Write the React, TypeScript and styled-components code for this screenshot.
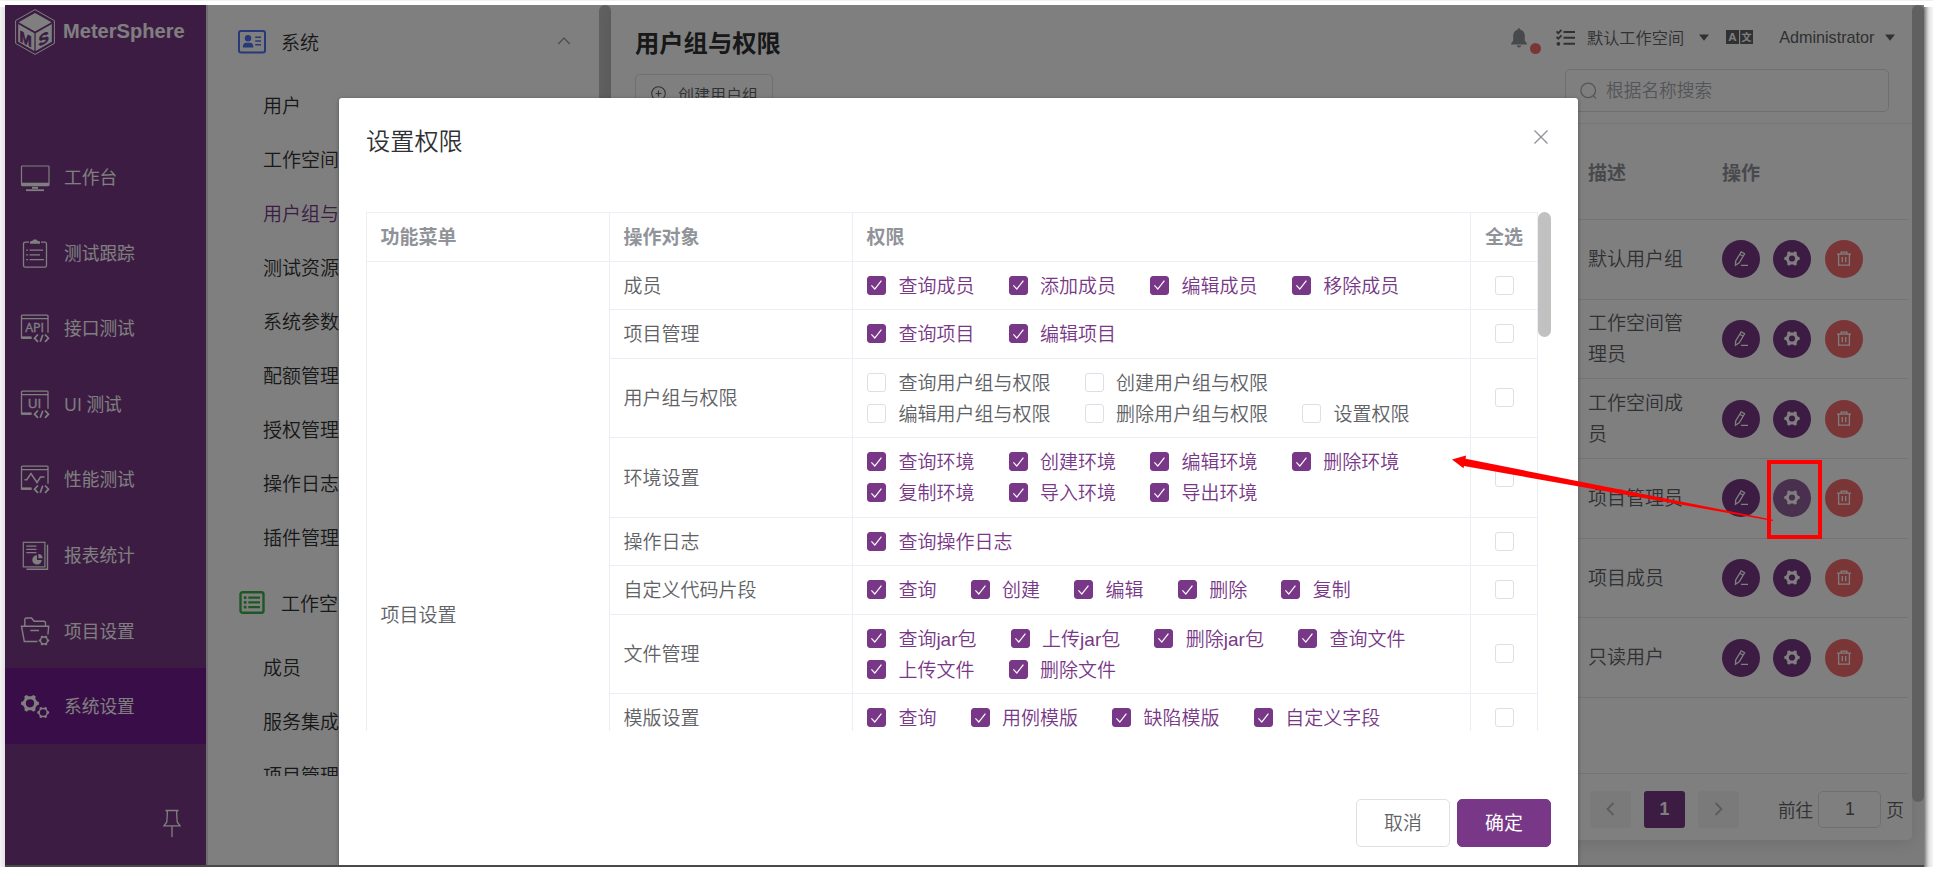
import React from "react";
import styled, { createGlobalStyle, css } from "styled-components";

const FONT = '"Liberation Sans", "Noto Sans CJK SC", sans-serif';
const PRIMARY = "#783887";

const GlobalStyle = createGlobalStyle`
  html, body { margin: 0; padding: 0; background: #fff; overflow: hidden; }
  *, *::before, *::after { box-sizing: border-box; }
  body { font-family: ${FONT}; font-size: 19px; font-weight: 350; color: #606266; }
`;

/* ---------- window ---------- */

const Page = styled.div`
  width: 1933px;
  height: 874px;
  display: flex;
  flex-direction: column;
  background: #fff;
  overflow: hidden;
`;
const TopEdge = styled.div`
  height: 5px;
  flex: none;
  border-top: 1px solid #f0f0f0;
`;
const Body = styled.div`
  display: flex;
  height: 862px;
`;
const SideEdge = styled.div<{ $right?: boolean }>`
  width: ${(p) => (p.$right ? 9 : 5)}px;
  margin-top: 2px;
  flex: none;
  background: ${(p) =>
    p.$right
      ? "linear-gradient(to right, #777 0%, #a8a8a8 22%, #d8d8d8 48%, #efefef 80%, #f2f2f2 100%)"
      : "linear-gradient(to right, #f3f3f3, #e2e2e4)"};
`;
const Frame = styled.div`
  position: relative;
  width: 1919px;
  height: 862px;
  display: flex;
  overflow: hidden;
  border-bottom: 2px solid #4b4849;
`;

/* ---------- primary sidebar ---------- */

const Sidebar = styled.aside`
  width: 201px;
  flex: none;
  background: ${PRIMARY};
  display: flex;
  flex-direction: column;
  color: #fff;
`;
const Brand = styled.div`
  height: 134.3px;
  padding: 4px 0 0 10px;
  display: flex;
  align-items: flex-start;
  gap: 8px;
`;
const BrandName = styled.span`
  font-weight: 700;
  font-size: 20.1px;
  line-height: 44px;
`;
const NavItem = styled.div<{ $active?: boolean }>`
  height: 75.6px;
  display: flex;
  align-items: center;
  padding-left: 15px;
  gap: 14px;
  font-size: 17.7px;
  font-weight: 400;
  font-family: "Open Sans", "Noto Sans CJK SC", sans-serif;
  background: ${(p) => (p.$active ? "#721b8e" : "transparent")};
  svg { flex: none; }
`;
const NavLabel = styled.span`
  line-height: 26px;
`;
const PinRow = styled.div`
  flex: 1;
  display: flex;
  justify-content: flex-end;
  padding: 65px 25px 0 0;
`;

/* ---------- secondary menu ---------- */

const SubMenu = styled.nav`
  width: 405px;
  flex: none;
  background: #fff;
  border-left: 2px solid #dcdce0;
  display: flex;
`;
const SubScroll = styled.div`
  width: 391px;
  height: 771px;
  overflow: hidden;
`;
const GroupHead = styled.div<{ $h: number }>`
  height: ${(p) => p.$h}px;
  display: flex;
  align-items: center;
  padding: 0 28px 0 30px;
  color: #303133;
  svg { flex: none; }
`;
const GroupTitle = styled.span`
  flex: 1;
  padding: 0 0 1px 15px;
`;
const SubItem = styled.div<{ $active?: boolean }>`
  height: 54px;
  line-height: 56px;
  padding-left: 55px;
  color: ${(p) => (p.$active ? PRIMARY : "#303133")};
  white-space: nowrap;
`;
const ScrollThumb = styled.div<{ $h: number; $w: number }>`
  width: ${(p) => p.$w}px;
  height: ${(p) => p.$h}px;
  flex: none;
  border-radius: ${(p) => p.$w / 2}px;
  background: #c1c1c1;
`;

/* ---------- main area ---------- */

const Main = styled.main`
  flex: 1;
  display: flex;
  background: #f6f6f7;
  min-width: 0;
`;
const Card = styled.section`
  width: 1301px;
  height: 835px;
  background: #fff;
  border-radius: 0 0 5px 5px;
  box-shadow: 0 3px 16px rgba(0, 0, 0, 0.1);
  display: flex;
  flex-direction: column;
`;
const CardHead = styled.header`
  height: 119px;
  flex: none;
  display: flex;
  justify-content: space-between;
  padding-left: 24px;
  border-bottom: 1px solid #ebeef5;
`;
const HeadLeft = styled.div`
  display: flex;
  flex-direction: column;
  align-items: flex-start;
`;
const PageTitle = styled.h1`
  margin: 0;
  height: 69px;
  line-height: 78px;
  font-size: 24.3px;
  color: #303133;
`;
const OutlineButton = styled.button`
  width: 138px;
  height: 41px;
  display: flex;
  align-items: center;
  gap: 12px;
  padding: 0 0 2px 15px;
  font: 350 16px ${FONT};
  color: #606266;
  background: #fff;
  border: 1px solid #dcdfe6;
  border-radius: 4px;
  white-space: nowrap;
`;
const HeadRight = styled.div`
  width: 401px;
  flex: none;
`;
const Tools = styled.div`
  height: 64px;
  display: flex;
  align-items: center;
  font-size: 16.2px;
  color: #606266;
  white-space: nowrap;
  svg { flex: none; }
`;
const Bell = styled.div`
  position: relative;
  width: 45px;
  height: 19px;
`;
const Dot = styled.i`
  position: absolute;
  left: 18.5px;
  top: 15px;
  width: 11px;
  height: 11px;
  border-radius: 50%;
  background: #f56c6c;
`;
const Gap = styled.span<{ $w: number }>`
  width: ${(p) => p.$w}px;
  flex: none;
`;
const SearchBox = styled.div`
  width: 324px;
  height: 43px;
  margin-left: 54px;
  display: flex;
  align-items: center;
  gap: 9px;
  padding-left: 14px;
  border: 1px solid #dcdfe6;
  border-radius: 5px;
  font-size: 17.7px;
  color: #a8abb2;
`;
const Placeholder = styled.span`
  padding-bottom: 4px;
`;
const UserRow = styled.div<{ $head?: boolean }>`
  height: ${(p) => (p.$head ? 96 : 79.7)}px;
  display: grid;
  grid-template-columns: 1fr 134px 186px;
  align-items: center;
  margin-right: 4px;
  padding-top: ${(p) => (p.$head ? 3 : 0)}px;
  border-bottom: 1px solid #e4e7ee;
  line-height: 31px;
  ${(p) => p.$head && css`
    color: #909399;
    font-weight: 700;
  `}
`;
const Desc = styled.div`
  grid-column: 2;
  width: 100px;
`;
const Actions = styled.div`
  grid-column: 3;
  display: flex;
  gap: 13.3px;
`;
const RoundButton = styled.button<{ $kind: "primary" | "soft" | "danger" }>`
  width: 38px;
  height: 38px;
  flex: none;
  padding: 0;
  border: 0;
  border-radius: 50%;
  color: #fff;
  display: flex;
  align-items: center;
  justify-content: center;
  background: ${(p) => ({ primary: PRIMARY, soft: "#93609f", danger: "#f56c6c" }[p.$kind])};
`;
const TableFoot = styled.div`
  height: 75.5px;
  margin-right: 4px;
  border-bottom: 1px solid #e4e7ee;
`;
const Pager = styled.div`
  flex: 1;
  display: flex;
  align-items: center;
  justify-content: flex-end;
  padding: 5px 8px 0 0;
  font-size: 17.7px;
  gap: 5px;
`;
const PageButton = styled.span<{ $on?: boolean }>`
  width: 41px;
  height: 37px;
  margin-right: 8px;
  display: flex;
  align-items: center;
  justify-content: center;
  border-radius: 3px;
  font-weight: 700;
  color: ${(p) => (p.$on ? "#fff" : "#a8abb2")};
  background: ${(p) => (p.$on ? PRIMARY : "#f4f4f5")};
`;
const PageInput = styled.span`
  width: 63px;
  height: 37px;
  line-height: 35px;
  text-align: center;
  border: 1px solid #dcdfe6;
  border-radius: 5px;
`;
const GoTo = styled.span`
  padding-left: 26px;
`;

/* ---------- dialog ---------- */

const Mask = styled.div`
  position: absolute;
  inset: 0;
  background: rgba(0, 0, 0, 0.5);
`;
const Dialog = styled.div`
  position: absolute;
  left: 334px;
  top: 93px;
  width: 1239px;
  height: 767px;
  padding: 0 27px;
  background: #fff;
  border-radius: 3px 3px 0 0;
  box-shadow: 0 1px 4px rgba(0, 0, 0, 0.35);
  display: flex;
  flex-direction: column;
`;
const DialogHead = styled.div`
  height: 114px;
  flex: none;
  display: flex;
  justify-content: space-between;
  align-items: flex-start;
  font-size: 24.2px;
  line-height: 32px;
  padding-top: 28px;
  color: #303133;
  svg { margin: 4px 3px 0 0; }
`;
const DialogBody = styled.div`
  height: 519px;
  flex: none;
  display: flex;
  overflow: hidden;
`;
const Table = styled.div`
  width: 1172px;
  flex: none;
  height: 754px;
  border: 1px solid #ebeef5;
  border-width: 1px 1px 0 1px;
`;
const HeadRow = styled.div`
  height: 49px;
  display: grid;
  grid-template-columns: 243px 243px 618px 1fr;
  border-bottom: 1px solid #ebeef5;
  color: #909399;
  font-weight: 700;
`;
const Cell = styled.div<{ $center?: boolean; $last?: boolean }>`
  display: flex;
  align-items: center;
  padding: 0 0 3px ${(p) => (p.$center ? 0 : 13.5)}px;
  justify-content: ${(p) => (p.$center ? "center" : "flex-start")};
  border-right: ${(p) => (p.$last ? "0" : "1px solid #ebeef5")};
  white-space: nowrap;
`;
const CheckCell = styled.div`
  display: flex;
  align-items: center;
  justify-content: center;
  padding-bottom: 1px;
`;
const Span = styled.div`
  display: flex;
  height: 705px;
`;
const MenuCell = styled(Cell)`
  width: 243px;
  flex: none;
`;
const Rows = styled.div`
  flex: 1;
`;
const Row = styled.div<{ $double?: boolean }>`
  height: ${(p) => (p.$double ? 79.6 : 48.4)}px;
  display: grid;
  grid-template-columns: 243px 618px 1fr;
  border-bottom: 1px solid #ebeef5;
`;
const Perms = styled.div`
  display: flex;
  flex-wrap: wrap;
  align-content: center;
  padding: 0 0 1px 14px;
  border-right: 1px solid #ebeef5;
`;
const Perm = styled.label<{ $on: boolean }>`
  height: 31px;
  display: flex;
  align-items: center;
  gap: 12.4px;
  margin-right: 34.2px;
  white-space: nowrap;
  color: ${(p) => (p.$on ? PRIMARY : "#606266")};
  &:last-child { margin-right: 0; }
`;
const PermName = styled.span`
  padding-bottom: 2px;
`;
const Box = styled.span<{ $on?: boolean }>`
  width: 19px;
  height: 19px;
  flex: none;
  display: flex;
  align-items: center;
  justify-content: center;
  border: 1px solid ${(p) => (p.$on ? PRIMARY : "#dcdfe6")};
  border-radius: 3px;
  background: ${(p) => (p.$on ? PRIMARY : "#fff")};
`;
const DialogFoot = styled.div`
  display: flex;
  justify-content: flex-end;
  gap: 7px;
  padding-top: 68px;
`;
const DialogButton = styled.button<{ $primary?: boolean }>`
  width: 94px;
  height: 48px;
  padding: 0 0 4px;
  font: ${(p) => (p.$primary ? 400 : 350)} 18.9px ${FONT};
  border-radius: 5px;
  border: 1px solid ${(p) => (p.$primary ? PRIMARY : "#dcdfe6")};
  color: ${(p) => (p.$primary ? "#fff" : "#606266")};
  background: ${(p) => (p.$primary ? PRIMARY : "#fff")};
`;
const Callout = styled.svg`
  position: absolute;
  left: 0;
  top: 0;
`;

/* ---------- icons ---------- */

const Logo = () => (
  <svg width="40" height="46" viewBox="0 0 40 46">
    <path d="M20 .6 39.4 11.6V34.4L20 45.4.6 34.4V11.6Z" fill="none" stroke="#fff" strokeWidth="1" />
    <path d="M20 4 36.5 13.2 20 22.6 3.5 13.2Z" fill="#fff" />
    <path d="M3.2 15 19.4 24.2V42L3.2 32.8Z" fill="#fff" />
    <path d="M36.8 15 20.6 24.2V42L36.8 32.8Z" fill="#fff" />
    <g fill={PRIMARY} stroke={PRIMARY} strokeWidth=".6" fontFamily="Liberation Sans" fontWeight="700">
      <text transform="matrix(.95 .5 0 1 4.4 32)" fontSize="15.5">M</text>
      <text transform="matrix(1 -.55 0 1 23.4 38)" fontSize="15.5">S</text>
    </g>
  </svg>
);

const gearPath = (cx: number, cy: number, r: number) => {
  const pts: string[] = [];
  for (let i = 0; i < 6; i++) {
    [-17, -9, 9, 17].forEach((o, k) => {
      const a = ((i * 60 + o - 60) * Math.PI) / 180;
      const rr = k === 1 || k === 2 ? r : r * 0.8;
      pts.push(`${(cx + rr * Math.cos(a)).toFixed(2)} ${(cy + rr * Math.sin(a)).toFixed(2)}`);
    });
  }
  return `M${pts.join("L")}Z`;
};

const WindowIcon = ({ children }: { children: React.ReactNode }) => (
  <svg width="30" height="30" viewBox="0 -0.7 30 30" fill="none" stroke="#fff" strokeWidth="1.3">
    <path d="M28 19V2.3Q28 1.5 27.2 1.5H2.3Q1.5 1.5 1.5 2.3V24.3H11.5M1.5 5H28" />
    <path d="M2 23.9H11.5" strokeWidth="2.4" />
    <path d="M18 20.8 14.5 24.5 18 28.2M25 20.8 28.5 24.5 25 28.2M22.8 21 20.2 28" strokeWidth="1.7" />
    {children}
  </svg>
);
const IconLabel = ({ t, size }: { t: string; size: number }) => (
  <text x="14.6" y="18.2" fontSize={size} textAnchor="middle" fill="#fff" stroke="#fff" strokeWidth=".3" fontFamily="Open Sans" fontWeight="400">{t}</text>
);

const navIcons: Record<string, React.ReactNode> = {
  desk: (
    <svg width="30" height="30" viewBox="0 -1 30 30" fill="none" stroke="#fff" strokeWidth="1.2">
      <rect x="1.5" y="3" width="27.5" height="19.6" rx=".8" />
      <path d="M1.5 21H29" strokeWidth="2.6" />
      <path d="M12 24.8H18" strokeWidth="2" />
      <path d="M6 27.2H24" strokeWidth="1.8" />
    </svg>
  ),
  track: (
    <svg width="30" height="30" viewBox="0 -0.7 30 30" fill="none" stroke="#fff" strokeWidth="1.3">
      <path d="M9 3.5H5.3Q3.5 3.5 3.5 5.3V26.7Q3.5 28.5 5.3 28.5H24.7Q26.5 28.5 26.5 26.7V5.3Q26.5 3.5 24.7 3.5H21" />
      <path d="M10 5V3.5Q10 2.4 11.3 2.4H12.4Q12.6.8 14 .8H16Q17.4.8 17.6 2.4H18.7Q20 2.4 20 3.5V5Z" fill="#fff" stroke="none" />
      <path d="M9.5 11.5H23M9.5 16.2H20M9.5 21H24M6.2 11.5H8M6.2 16.2H8M6.2 21H8" />
    </svg>
  ),
  api: <WindowIcon><IconLabel t="API" size={12.5} /></WindowIcon>,
  ui: <WindowIcon><IconLabel t="UI" size={13.5} /></WindowIcon>,
  perf: <WindowIcon><path d="M4.5 15H6.8L11 8.8 17 17.8 20.5 12.2H24.5" strokeWidth="1.5" /></WindowIcon>,
  report: (
    <svg width="30" height="30" viewBox="0 -0.7 30 30" fill="none" stroke="#fff" strokeWidth="1.2">
      <rect x="3.3" y="1.6" width="21.6" height="24.6" />
      <path d="M27.5 4V28.6H6.5" strokeWidth="1.4" />
      <path d="M6.3 5.5H16.5M6.3 8.7H16.5M6.3 12H16.5" />
      <path d="M17 14.5A4.7 4.7 0 1 0 21.7 19.2H17Z" fill="#fff" stroke="none" />
      <path d="M18.4 13.4A4.4 4.4 0 0 1 22.6 17.6H18.4Z" fill="#fff" stroke="none" />
    </svg>
  ),
  project: (
    <svg width="30" height="30" viewBox="0 -0.5 30 30" fill="none" stroke="#fff" strokeWidth="1.4">
      <path d="M4.8 9.5V3Q4.8 1.5 6.2 1.5H11.5L14.2 4.8H24Q25.5 4.8 25.5 6.3V9.5" />
      <path d="M17.5 25H4.3L1.5 9.7H28.7L27.9 18M10.3 14H19" />
      <path d={gearPath(24, 24, 5.3)} fill="#fff" stroke="none" />
      <circle cx="24" cy="24" r="2.8" fill={PRIMARY} stroke="none" />
    </svg>
  ),
  system: (
    <svg width="30" height="30" viewBox="0 0 30 30">
      <path d={gearPath(10, 12.3, 9)} fill="#fff" />
      <circle cx="10" cy="12.3" r="4.1" fill="#721b8e" />
      <path d={gearPath(23.2, 21.5, 6)} fill="#fff" />
      <circle cx="23.2" cy="21.5" r="3.3" fill="#721b8e" />
    </svg>
  ),
};

const PinIcon = () => (
  <svg width="18" height="29" viewBox="0 0 18 29" fill="none" stroke="#fff" strokeWidth="1.3">
    <path d="M2.5 1.5H15.5M4.3 1.5V5.5L3.8 13 1 16.8H17L14.2 13 13.7 5.5V1.5M9 17V28" />
  </svg>
);
const IdIcon = () => (
  <svg width="28" height="24" viewBox="0 0 28 24">
    <rect x="1" y="1" width="26" height="21.6" rx="2" fill="none" stroke="#5171f0" strokeWidth="2" />
    <circle cx="10" cy="8.2" r="3.2" fill="#5171f0" />
    <path d="M4.8 17.5Q4.8 12.8 8 12.8H12Q15.4 12.8 15.4 17.5Z" fill="#5171f0" />
    <path d="M17.2 7.2H23M17.2 11H23M17.2 14.8H23" stroke="#5171f0" strokeWidth="1.6" />
  </svg>
);
const ListIcon = () => (
  <svg width="28" height="24" viewBox="0 0 28 24" fill="none" stroke="#3faf49">
    <rect x="2.5" y="1.2" width="23" height="20.6" rx="2" strokeWidth="2.4" />
    <path d="M10.3 6.6H22M10.3 11.4H22M10.3 16.2H22" strokeWidth="2.3" />
    <path d="M5.8 6.6H8.5M5.8 11.4H8.5M5.8 16.2H8.5" strokeWidth="2.7" />
  </svg>
);
const Chevron = () => (
  <svg width="14" height="12" viewBox="0 0 14 12" fill="none" stroke="#909399" strokeWidth="1.2">
    <path d="M1.2 8 7 2 12.8 8" />
  </svg>
);
const Caret = () => (
  <svg width="10" height="7" viewBox="0 0 10 7"><path d="M0 .5H10L5 6.8Z" fill="#606266" /></svg>
);
const EditIcon = () => (
  <svg width="20" height="20" viewBox="0 0 20 20" fill="none" stroke="currentColor" strokeWidth="1.3">
    <path d="M10.2 2.8 13.6 4.8 8.2 13.9 4.4 16.2 4.7 11.9ZM8.8 5.2 12.2 7.2M10 16.3H17" />
  </svg>
);
const GearIcon = ({ hole }: { hole: string }) => (
  <svg width="20" height="20" viewBox="0 0 20 20">
    <path d={gearPath(10, 9.5, 7.8)} fill="currentColor" />
    <circle cx="10" cy="9.5" r="3.1" fill={hole} />
  </svg>
);
const TrashIcon = () => (
  <svg width="20" height="20" viewBox="0 0 20 20" fill="none" stroke="currentColor" strokeWidth="1.3">
    <path d="M3 5.2H17M7.2 5V3.2H12.8V5M4.6 5.2V16.2H15.4V5.2M8.3 8V13.2M11.7 8V13.2" />
  </svg>
);

/* ---------- data ---------- */

const nav: [string, string][] = [
  ["desk", "工作台"],
  ["track", "测试跟踪"],
  ["api", "接口测试"],
  ["ui", "UI 测试"],
  ["perf", "性能测试"],
  ["report", "报表统计"],
  ["project", "项目设置"],
  ["system", "系统设置"],
];
const systemItems = ["用户", "工作空间", "用户组与权限", "测试资源池", "系统参数设置", "配额管理", "授权管理", "操作日志", "插件管理"];
const workspaceItems = ["成员", "服务集成", "项目管理"];
const groups = ["默认用户组", "工作空间管理员", "工作空间成员", "项目管理员", "项目成员", "只读用户"];

type PermRow = { name: string; perms: string[]; off?: boolean; double?: boolean };
const rows: PermRow[] = [
  { name: "成员", perms: ["查询成员", "添加成员", "编辑成员", "移除成员"] },
  { name: "项目管理", perms: ["查询项目", "编辑项目"] },
  { name: "用户组与权限", off: true, double: true, perms: ["查询用户组与权限", "创建用户组与权限", "编辑用户组与权限", "删除用户组与权限", "设置权限"] },
  { name: "环境设置", double: true, perms: ["查询环境", "创建环境", "编辑环境", "删除环境", "复制环境", "导入环境", "导出环境"] },
  { name: "操作日志", perms: ["查询操作日志"] },
  { name: "自定义代码片段", perms: ["查询", "创建", "编辑", "删除", "复制"] },
  { name: "文件管理", double: true, perms: ["查询jar包", "上传jar包", "删除jar包", "查询文件", "上传文件", "删除文件"] },
  { name: "模版设置", perms: ["查询", "用例模版", "缺陷模版", "自定义字段"] },
];

const Check = ({ on }: { on?: boolean }) => (
  <Box $on={on}>
    {on && (
      <svg width="13" height="12" viewBox="0 0 13 12" fill="none" stroke="#fff" strokeWidth="1.2">
        <path d="M1.4 6.4 4.8 10 11.4 1.6" />
      </svg>
    )}
  </Box>
);

export default function App() {
  return (
    <Page>
      <GlobalStyle />
      <TopEdge />
      <Body>
        <SideEdge />
        <Frame>
          <Sidebar>
            <Brand>
              <Logo />
              <BrandName>MeterSphere</BrandName>
            </Brand>
            {nav.map(([icon, label]) => (
              <NavItem key={icon} $active={icon === "system"}>
                {navIcons[icon]}
                <NavLabel>{label}</NavLabel>
              </NavItem>
            ))}
            <PinRow><PinIcon /></PinRow>
          </Sidebar>

          <SubMenu>
            <SubScroll>
              <GroupHead $h={74}>
                <IdIcon />
                <GroupTitle>系统</GroupTitle>
                <Chevron />
              </GroupHead>
              {systemItems.map((t) => (
                <SubItem key={t} $active={t === "用户组与权限"}>{t}</SubItem>
              ))}
              <GroupHead $h={76}>
                <ListIcon />
                <GroupTitle>工作空间</GroupTitle>
              </GroupHead>
              {workspaceItems.map((t) => <SubItem key={t}>{t}</SubItem>)}
            </SubScroll>
            <ScrollThumb $w={12} $h={500} />
          </SubMenu>

          <Main>
            <Card>
              <CardHead>
                <HeadLeft>
                  <PageTitle>用户组与权限</PageTitle>
                  <OutlineButton>
                    <svg width="15" height="15" viewBox="0 0 15 15" fill="none" stroke="#606266" strokeWidth="1.1">
                      <circle cx="7.5" cy="7.5" r="6.8" />
                      <path d="M7.5 4.6V10.4M4.6 7.5H10.4" />
                    </svg>
                    创建用户组
                  </OutlineButton>
                </HeadLeft>
                <HeadRight>
                  <Tools>
                    <Bell>
                      <svg width="16" height="20" viewBox="0 0 16 20" fill="#909399">
                        <path d="M8 0Q9.2 0 9.2 1.6Q13.8 3 13.8 8V12.5L16 15.8V16.4H0V15.8L2.2 12.5V8Q2.2 3 6.8 1.6Q6.8 0 8 0ZM5.6 17.6H10.4Q10 19.6 8 19.6Q6 19.6 5.6 17.6Z" />
                      </svg>
                      <Dot />
                    </Bell>
                    <svg width="19" height="17" viewBox="0 0 19 17" fill="none" stroke="#606266" strokeWidth="2">
                      <path d="M7.5 3H19M7.5 8.7H19M7.5 14.8H19" strokeWidth="2.1" />
                      <path d="M.5 2.5 2.3 4.2 5.5.8M.5 8 2.3 9.7 5.5 6.3" strokeWidth="1.8" />
                      <circle cx="2.4" cy="14.8" r=".9" />
                    </svg>
                    <Gap $w={12} />
                    默认工作空间
                    <Gap $w={14.5} />
                    <Caret />
                    <Gap $w={17} />
                    <svg width="27" height="14" viewBox="0 0 27 14">
                      <path d="M0 0H13V14H0ZM14.2 0H27V14H14.2Z" fill="#606266" />
                      <text x="6.5" y="11.2" fontSize="11.5" fontWeight="700" fill="#fff" textAnchor="middle" fontFamily="Liberation Sans">A</text>
                      <text x="20.6" y="11" fontSize="10" fontWeight="700" fill="#fff" textAnchor="middle" fontFamily="Noto Sans CJK SC">文</text>
                    </svg>
                    <Gap $w={26.5} />
                    Administrator
                    <Gap $w={11} />
                    <Caret />
                  </Tools>
                  <SearchBox>
                    <svg width="17" height="18" viewBox="0 0 17 18" fill="none" stroke="#a8abb2" strokeWidth="1.3">
                      <circle cx="8.2" cy="8.4" r="7.3" />
                      <path d="M13.3 13.6 16 16.6" />
                    </svg>
                    <Placeholder>根据名称搜索</Placeholder>
                  </SearchBox>
                </HeadRight>
              </CardHead>
              <UserRow $head>
                <Desc>描述</Desc>
                <Actions>操作</Actions>
              </UserRow>
              {groups.map((g) => (
                <UserRow key={g}>
                  <Desc>{g}</Desc>
                  <Actions>
                    <RoundButton $kind="primary"><EditIcon /></RoundButton>
                    <RoundButton $kind={g === "项目管理员" ? "soft" : "primary"}>
                      <GearIcon hole={g === "项目管理员" ? "#93609f" : PRIMARY} />
                    </RoundButton>
                    <RoundButton $kind="danger"><TrashIcon /></RoundButton>
                  </Actions>
                </UserRow>
              ))}
              <TableFoot />
              <Pager>
                <PageButton>
                  <svg width="9" height="14" viewBox="0 0 9 14" fill="none" stroke="#b4b7bd" strokeWidth="1.8"><path d="M7.5 1 1.5 7 7.5 13" /></svg>
                </PageButton>
                <PageButton $on>1</PageButton>
                <PageButton>
                  <svg width="9" height="14" viewBox="0 0 9 14" fill="none" stroke="#b4b7bd" strokeWidth="1.8"><path d="M1.5 1 7.5 7 1.5 13" /></svg>
                </PageButton>
                <GoTo>前往</GoTo>
                <PageInput>1</PageInput>
                <span>页</span>
              </Pager>
            </Card>
            <ScrollThumb $w={12} $h={797} />
          </Main>

          <Mask />
          <Dialog>
            <DialogHead>
              设置权限
              <svg width="14" height="14" viewBox="0 0 14 14" stroke="#909399" strokeWidth="1.4"><path d="M.5.5 13.5 13.5M13.5.5.5 13.5" /></svg>
            </DialogHead>
            <DialogBody>
              <Table>
                <HeadRow>
                  <Cell>功能菜单</Cell>
                  <Cell>操作对象</Cell>
                  <Cell>权限</Cell>
                  <Cell $center $last>全选</Cell>
                </HeadRow>
                <Span>
                  <MenuCell>项目设置</MenuCell>
                  <Rows>
                    {rows.map((r) => (
                      <Row key={r.name} $double={r.double}>
                        <Cell>{r.name}</Cell>
                        <Perms>
                          {r.perms.map((p) => (
                            <Perm key={p} $on={!r.off}>
                              <Check on={!r.off} />
                              <PermName>{p}</PermName>
                            </Perm>
                          ))}
                        </Perms>
                        <CheckCell><Check /></CheckCell>
                      </Row>
                    ))}
                  </Rows>
                </Span>
              </Table>
              <ScrollThumb $w={13} $h={125} />
            </DialogBody>
            <DialogFoot>
              <DialogButton>取消</DialogButton>
              <DialogButton $primary>确定</DialogButton>
            </DialogFoot>
          </Dialog>

          <Callout width="1919" height="860" viewBox="5 5 1919 860">
            <rect x="1769" y="462" width="51" height="75" fill="none" stroke="#f00" strokeWidth="4" />
            <path d="M1452 459.6 1466 455.5 1465.6 458.8 1773 519.8 1773 521 1464 466 1463.5 468.3Z" fill="#f00" />
          </Callout>
        </Frame>
        <SideEdge $right />
      </Body>
    </Page>
  );
}
